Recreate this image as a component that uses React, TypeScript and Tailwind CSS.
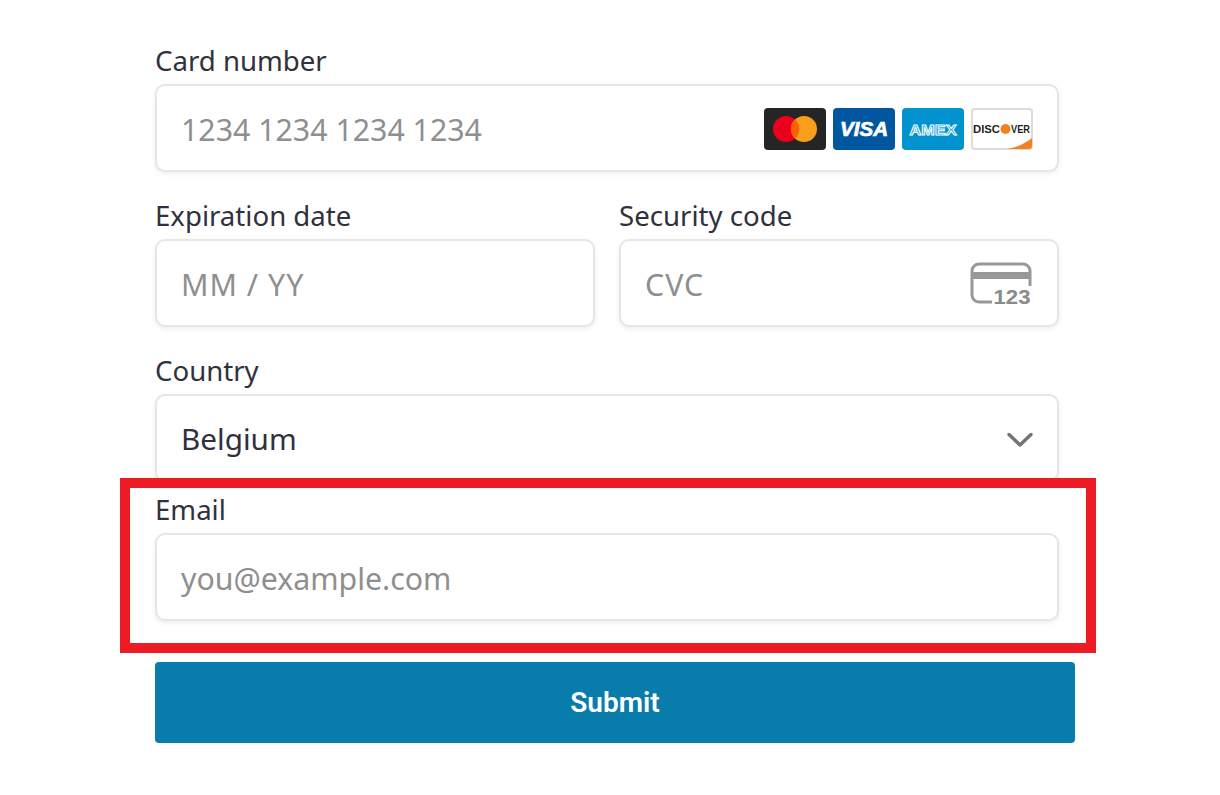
const font = "font-['Noto_Sans',sans-serif]";
const fieldBox =
  "flex items-center h-[88px] pt-[1px] rounded-[10px] border-2 border-[#e6e6e6] bg-white pl-[24px] pr-[24px] shadow-[0_2px_5px_rgba(0,0,0,0.07)] text-[30.3px]";

function Label({ children }: { children: React.ReactNode }) {
  return <div className="h-[24px] mb-[11px] flex items-center text-[27.6px] text-[#30313d]">{children}</div>;
}

function Placeholder({ children, wide }: { children: React.ReactNode; wide?: boolean }) {
  return <span className={wide ? "block pt-[2px] text-[#8f8f8f] tracking-[1px]" : "block pt-[2px] text-[#8f8f8f]"}>{children}</span>;
}

function Mastercard() {
  return (
    <svg width="62" height="42" viewBox="0 0 62 42">
      <rect width="62" height="42" rx="4" fill="#252525" />
      <circle cx="22" cy="21" r="13" fill="#eb001b" />
      <circle cx="40" cy="21" r="13" fill="#f79e1b" />
      <path d="M31 11.4a13 13 0 0 1 0 19.2a13 13 0 0 1 0-19.2z" fill="#ff5f00" />
    </svg>
  );
}

function Visa() {
  return (
    <svg width="62" height="42" viewBox="0 0 62 42">
      <rect width="62" height="42" rx="4" fill="#00579f" />
      <text x="31" y="28" textAnchor="middle" fontFamily="Liberation Sans, sans-serif" fontWeight="700" fontStyle="italic" fontSize="20" fill="#fff" stroke="#fff" strokeWidth="0.7" textLength="48" lengthAdjust="spacingAndGlyphs">VISA</text>
    </svg>
  );
}

function Amex() {
  return (
    <svg width="62" height="42" viewBox="0 0 62 42">
      <rect width="62" height="42" rx="4" fill="#0193d0" />
      <text x="31" y="26.5" textAnchor="middle" fontFamily="Liberation Sans, sans-serif" fontWeight="700" fontSize="15" fill="#0193d0" stroke="#fff" strokeWidth="1" textLength="47" lengthAdjust="spacingAndGlyphs">AMEX</text>
    </svg>
  );
}

function Discover() {
  return (
    <svg width="62" height="42" viewBox="0 0 62 42">
      <rect x="1" y="1" width="60" height="40" rx="3" fill="#fff" stroke="#dcdcdc" strokeWidth="2" />
      <path d="M61 30v8a3 3 0 0 1-3 3H36c11-2 19-6 25-11z" fill="#f48120" />
      <text x="2" y="25" fontFamily="Liberation Sans, sans-serif" fontWeight="700" fontSize="11.5" fill="#231f20" textLength="27" lengthAdjust="spacingAndGlyphs">DISC</text>
      <circle cx="34.5" cy="21" r="5" fill="#f48120" />
      <text x="40" y="25" fontFamily="Liberation Sans, sans-serif" fontWeight="700" fontSize="11" fill="#231f20" textLength="19" lengthAdjust="spacingAndGlyphs">VER</text>
    </svg>
  );
}

function CvcIcon() {
  return (
    <svg width="62" height="44" viewBox="0 0 62 44">
      <path d="M22 40H9a7 7 0 0 1-7-7V9a7 7 0 0 1 7-7h44a7 7 0 0 1 7 7v15" fill="none" stroke="#989896" strokeWidth="3" />
      <rect x="2" y="10" width="58" height="7" fill="#989896" />
      <text x="60.5" y="41.5" textAnchor="end" fontFamily="Liberation Sans, sans-serif" fontWeight="700" fontSize="20" fill="#8a8a88" textLength="37" lengthAdjust="spacingAndGlyphs">123</text>
    </svg>
  );
}

function Chevron() {
  return (
    <svg width="26" height="16" viewBox="0 0 26 16" fill="none" className="mt-[2px]">
      <path d="M2 2.5 13 13 24 2.5" stroke="#73746f" strokeWidth="3.4" strokeLinecap="round" strokeLinejoin="round" />
    </svg>
  );
}

export default function App() {
  return (
    <div className={`relative w-[1220px] h-[795px] overflow-hidden bg-white pt-[49px] pl-[155px] ${font}`}>
      <div className="w-[904px]">
        <Label>Card number</Label>
        <div className={`${fieldBox} justify-between pr-[23px]`}>
          <Placeholder>1234 1234 1234 1234</Placeholder>
          <div className="flex gap-[7px]">
            <Mastercard />
            <Visa />
            <Amex />
            <Discover />
          </div>
        </div>

        <div className="mt-[32px] grid grid-cols-[440px_440px] gap-x-[24px]">
          <div>
            <Label>Expiration date</Label>
            <div className={fieldBox}>
              <Placeholder wide>MM / YY</Placeholder>
            </div>
          </div>
          <div>
            <Label>Security code</Label>
            <div className={`${fieldBox} justify-between pr-[25px]`}>
              <Placeholder wide>CVC</Placeholder>
              <CvcIcon />
            </div>
          </div>
        </div>

        <div className="mt-[32px]">
          <Label>Country</Label>
          <div className={`${fieldBox} justify-between`}>
            <span className="block pt-[2px] text-[#30313d] text-[29.7px]">Belgium</span>
            <Chevron />
          </div>
        </div>

        <div className="mt-[16px]">
          <Label>Email</Label>
          <div className={fieldBox}>
            <Placeholder>you@example.com</Placeholder>
          </div>
        </div>
      </div>

      <button className="mt-[41px] pt-[1px] block w-[920px] h-[81px] rounded-[4px] bg-[#087cab] text-white text-[28px] font-semibold font-['Roboto',sans-serif]">
        Submit
      </button>

      {/* highlight drawn over the form */}
      <div className="absolute left-[120px] top-[478px] w-[976px] h-[175px] border-[10px] border-[#ed1c24]" />
    </div>
  );
}
